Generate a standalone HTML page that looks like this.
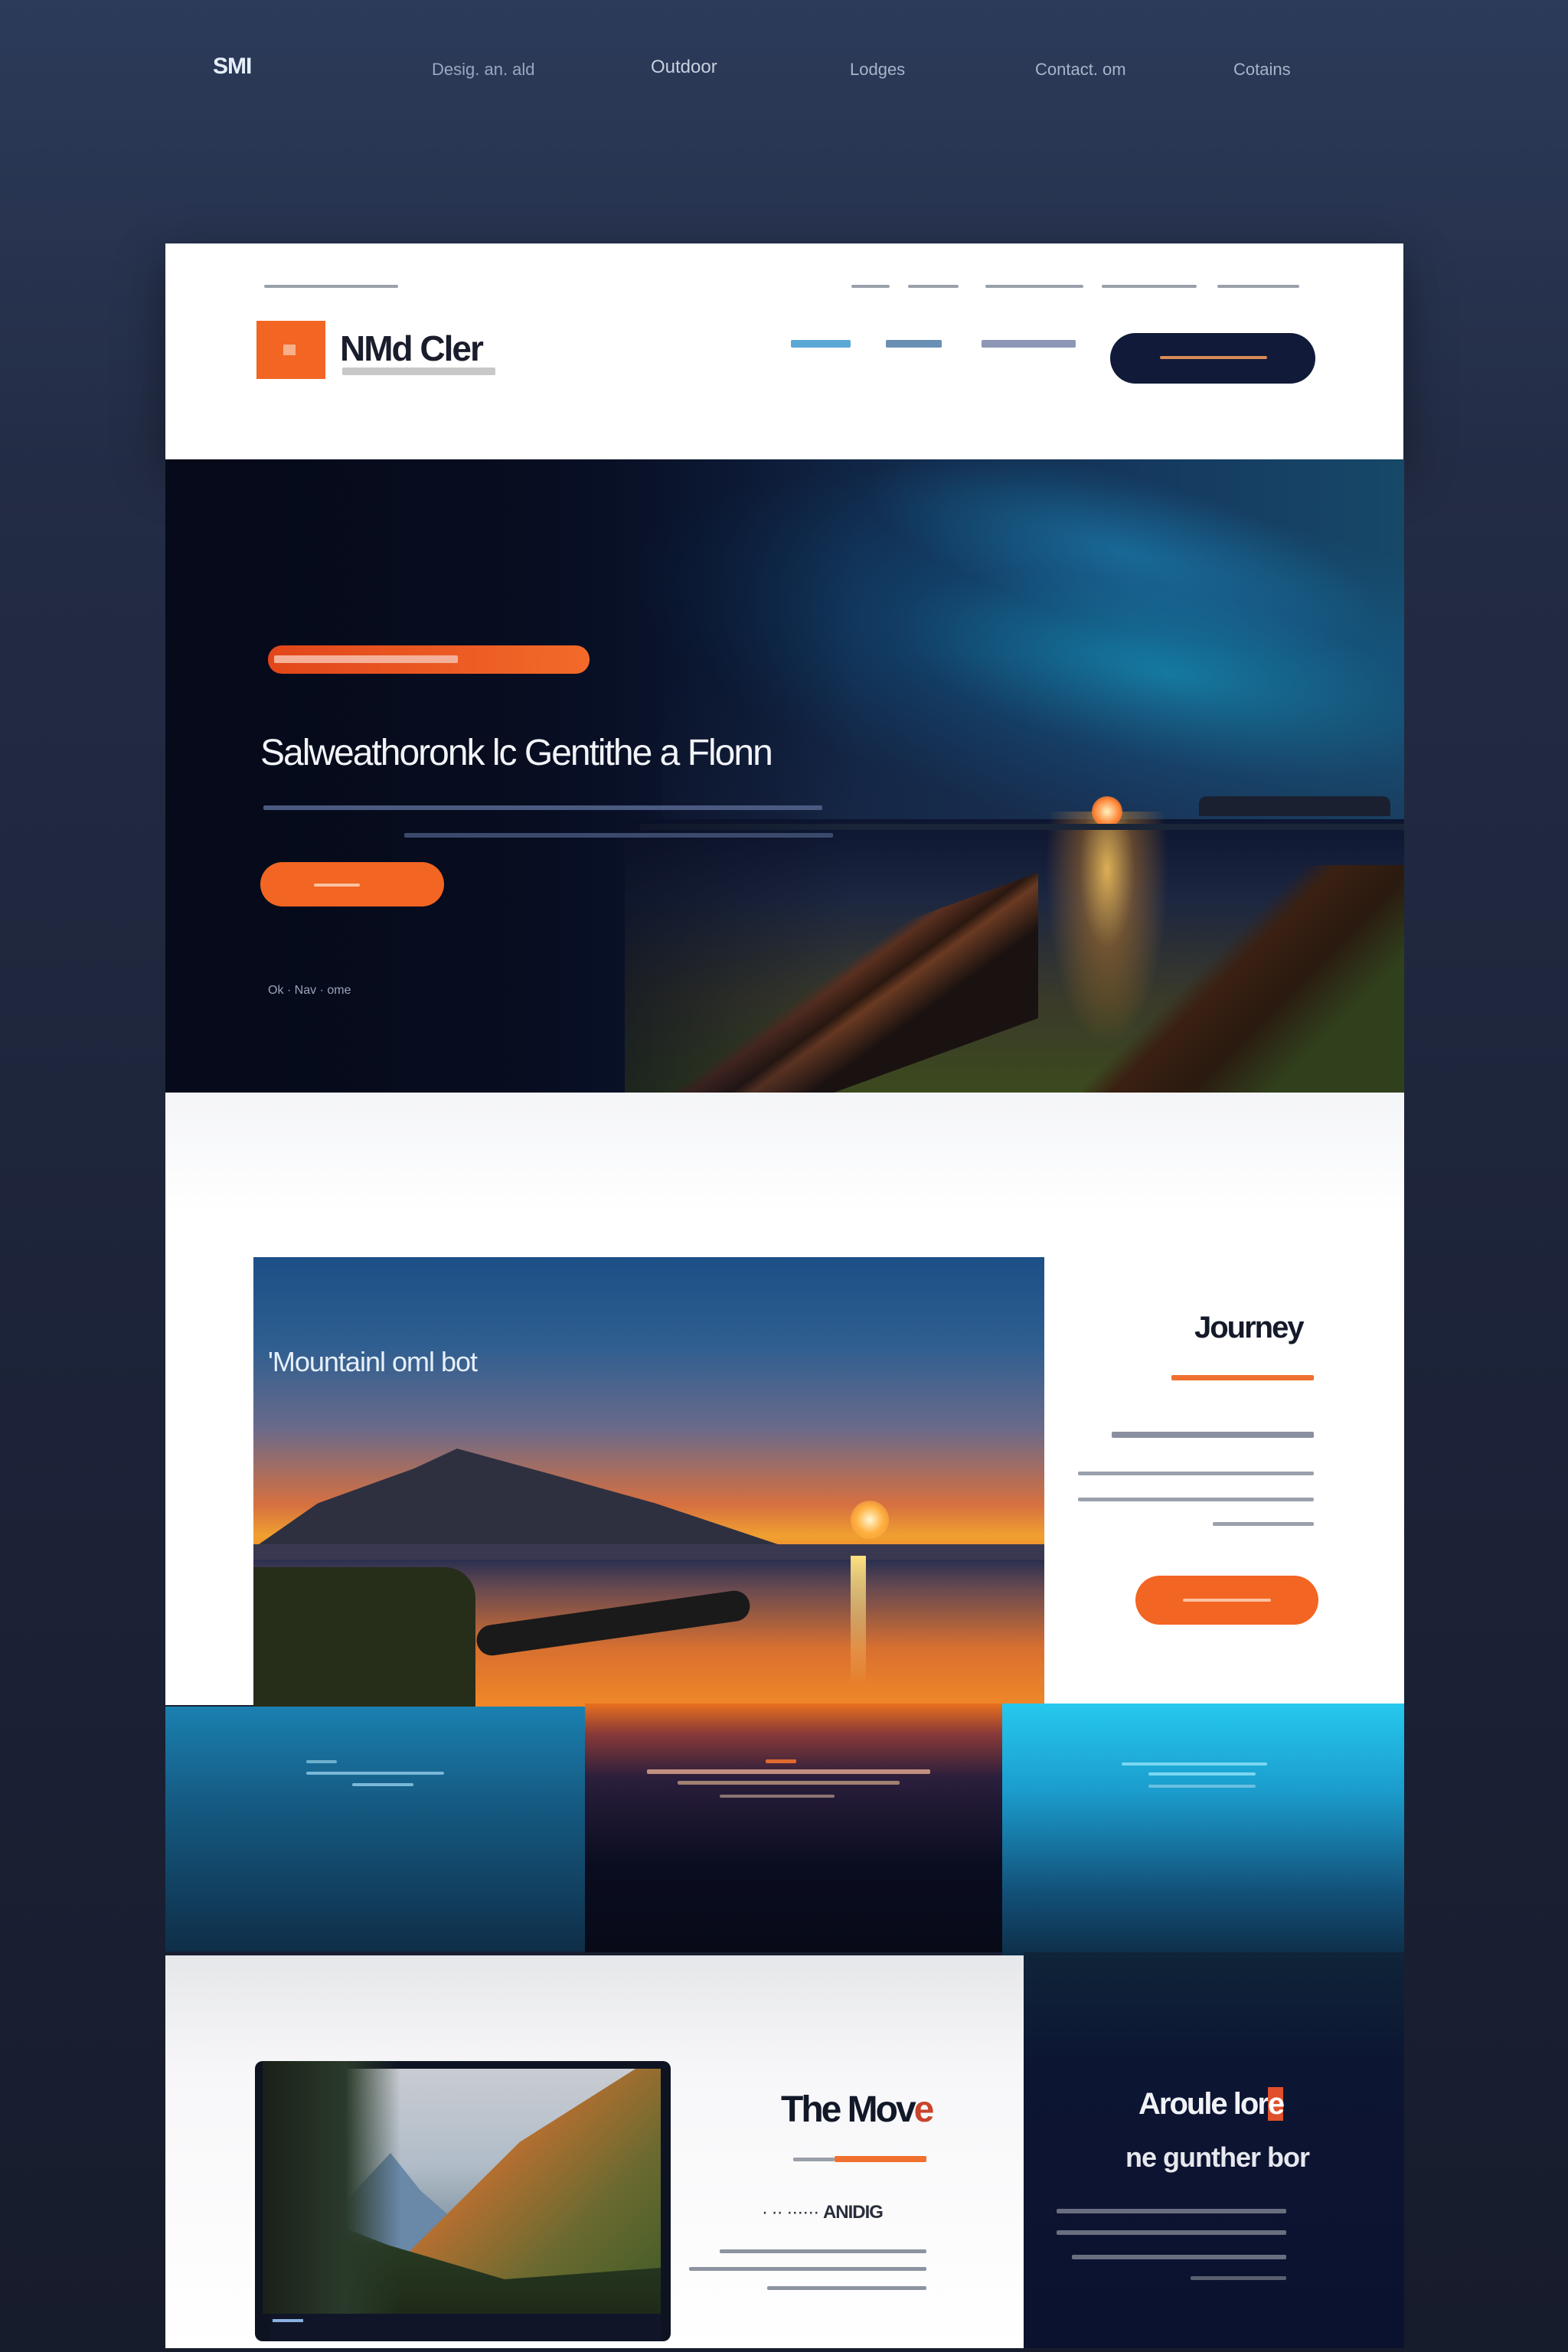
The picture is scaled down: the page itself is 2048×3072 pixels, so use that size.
<!DOCTYPE html>
<html><head><meta charset="utf-8"><style>
*{margin:0;padding:0;box-sizing:border-box}
body{width:2048px;height:3072px;position:relative;overflow:hidden;font-family:"Liberation Sans",sans-serif;background:linear-gradient(180deg,#2c3b5a 0%,#232c45 20%,#1c2338 60%,#171c2c 100%)}
.a{position:absolute}
.t{position:absolute;white-space:nowrap}
.ln{position:absolute;height:5px;border-radius:2px}
</style></head><body>
<!-- top nav -->
<div class="t" style="left:278px;top:70px;font-size:30px;font-weight:bold;color:#e6eef8;letter-spacing:-1px">SMI</div>
<div class="t" style="left:564px;top:78px;font-size:22px;color:#9aa8bf">Desig. an. ald</div>
<div class="t" style="left:850px;top:74px;font-size:24px;color:#c7d0de">Outdoor</div>
<div class="t" style="left:1110px;top:78px;font-size:22px;color:#a8b4c8">Lodges</div>
<div class="t" style="left:1352px;top:78px;font-size:22px;color:#a8b4c8">Contact. om</div>
<div class="t" style="left:1611px;top:78px;font-size:22px;color:#a8b4c8">Cotains</div>

<!-- header card -->
<div class="a" style="left:216px;top:318px;width:1617px;height:282px;background:#fff;box-shadow:0 20px 60px rgba(0,0,0,.4)"></div>
<div class="ln" style="left:345px;top:372px;width:175px;height:4px;background:#9aa0aa"></div>
<div class="ln" style="left:1112px;top:372px;width:50px;height:4px;background:#9aa0aa"></div>
<div class="ln" style="left:1186px;top:372px;width:66px;height:4px;background:#9aa0aa"></div>
<div class="ln" style="left:1287px;top:372px;width:128px;height:4px;background:#9aa0aa"></div>
<div class="ln" style="left:1439px;top:372px;width:124px;height:4px;background:#9aa0aa"></div>
<div class="ln" style="left:1590px;top:372px;width:107px;height:4px;background:#9aa0aa"></div>
<div class="a" style="left:335px;top:419px;width:90px;height:76px;background:#f26522"></div>
<div class="a" style="left:370px;top:450px;width:16px;height:14px;background:#f7b08a"></div>
<div class="t" style="left:444px;top:428px;font-size:46px;font-weight:bold;color:#1a1d2c;letter-spacing:-2px">NMd Cler</div>
<div class="ln" style="left:447px;top:480px;width:200px;height:10px;background:#c8c8c8"></div>
<div class="ln" style="left:1033px;top:444px;width:78px;height:10px;background:#5ba7d6"></div>
<div class="ln" style="left:1157px;top:444px;width:73px;height:10px;background:#6a8fb5"></div>
<div class="ln" style="left:1282px;top:444px;width:123px;height:10px;background:#8d97b5"></div>
<div class="a" style="left:1450px;top:435px;width:268px;height:66px;border-radius:33px;background:#111a38"></div>
<div class="ln" style="left:1515px;top:465px;width:140px;height:4px;background:#d98a55"></div>

<!-- hero -->
<div class="a" style="left:216px;top:600px;width:1618px;height:827px;overflow:hidden;background:linear-gradient(90deg,#070b1c 0%,#0b1430 30%,#102545 55%,#153a60 80%,#164868 100%)">
  <div class="a" style="left:600px;top:-100px;width:1200px;height:650px;background:radial-gradient(ellipse 60% 35% at 60% 55%,rgba(20,170,210,.6),rgba(20,120,180,.25) 50%,rgba(0,0,0,0) 100%);transform:rotate(12deg)"></div>
  <div class="a" style="left:900px;top:20px;width:700px;height:200px;background:radial-gradient(ellipse at 50% 50%,rgba(30,150,200,.45),rgba(0,0,0,0) 70%);transform:rotate(15deg)"></div>
  <div class="a" style="left:650px;top:0;width:1000px;height:560px;background:linear-gradient(180deg,rgba(0,0,0,0) 45%,rgba(30,40,70,.6) 100%)"></div>
  <div class="a" style="left:600px;top:470px;width:1018px;height:360px;background:linear-gradient(180deg,#0d1530 0%,#1d2740 30%,#3a3a2a 65%,#3c4a1e 100%)"></div>
  <div class="a" style="left:1130px;top:460px;width:200px;height:380px;background:radial-gradient(ellipse 40% 60% at 50% 20%,rgba(255,200,90,.85),rgba(240,150,40,.35) 45%,rgba(0,0,0,0) 100%)"></div>
  <div class="a" style="left:1210px;top:440px;width:40px;height:40px;border-radius:50%;background:radial-gradient(#fff2c0,#ff8030 60%,rgba(255,100,30,0))"></div>
  <div class="a" style="left:1350px;top:440px;width:250px;height:26px;background:#1a2030;border-radius:10px 10px 0 0"></div>
  <div class="a" style="left:620px;top:476px;width:1000px;height:8px;background:#1a2538"></div>
  <div class="a" style="left:590px;top:640px;width:550px;height:190px;background:linear-gradient(160deg,rgba(0,0,0,0) 0%,rgba(0,0,0,0) 35%,#5a3020 40%,#2a1810 50%,#6a3a22 55%,#1a1210 70%);transform:skewY(-20deg)"></div>
  <div class="a" style="left:1200px;top:530px;width:420px;height:300px;background:linear-gradient(135deg,rgba(0,0,0,0) 40%,#3a2012 46%,#2a1a10 60%,#30401c 75%)"></div>
  <div class="a" style="left:0;top:0;width:900px;height:827px;background:linear-gradient(90deg,#060a1a 0%,rgba(7,12,30,.9) 50%,rgba(7,12,30,0) 100%)"></div>
</div>
<div class="a" style="left:350px;top:843px;width:420px;height:37px;border-radius:18px;background:linear-gradient(90deg,#e2461a,#f26a2a)"></div>
<div class="ln" style="left:358px;top:856px;width:240px;height:10px;background:#f5b09a"></div>
<div class="t" style="left:340px;top:956px;font-size:48px;color:#f2f4f8;letter-spacing:-2px">Salweathoronk lc Gentithe a Flonn</div>
<div class="ln" style="left:344px;top:1052px;width:730px;height:6px;background:#4a5a80"></div>
<div class="ln" style="left:528px;top:1088px;width:560px;height:6px;background:#3b4a6c"></div>
<div class="a" style="left:340px;top:1126px;width:240px;height:58px;border-radius:29px;background:#f26522"></div>
<div class="ln" style="left:410px;top:1154px;width:60px;height:4px;background:#f9c2a0"></div>
<div class="t" style="left:350px;top:1285px;font-size:16px;color:#9aa3bb">Ok · Nav · ome</div>

<!-- white section -->
<div class="a" style="left:216px;top:1427px;width:1618px;height:800px;background:linear-gradient(180deg,#f4f5f8,#ffffff 20%)"></div>
<div class="a" style="left:331px;top:1642px;width:1033px;height:588px;overflow:hidden;background:linear-gradient(180deg,#1c4f86 0%,#2f5f90 20%,#6a6a8a 38%,#d67040 55%,#f0a030 62%,#f07020 70%,#c85a20 85%,#e8701e 100%)">
  <div class="a" style="left:0;top:250px;width:700px;height:130px;background:#2e3040;clip-path:polygon(0 100%,12% 55%,30% 20%,38% 0,55% 25%,75% 55%,100% 100%)"></div>
  <div class="a" style="left:0;top:375px;width:1033px;height:20px;background:#3a3850"></div>
  <div class="a" style="left:780px;top:318px;width:50px;height:50px;border-radius:50%;background:radial-gradient(#fff8d0,#ffb040 50%,rgba(255,150,40,0))"></div>
  <div class="a" style="left:0;top:395px;width:1033px;height:193px;background:linear-gradient(180deg,#2a3050 0%,#6a4a50 20%,#d87030 60%,#f08828 100%)"></div>
  <div class="a" style="left:0;top:405px;width:290px;height:183px;background:#262e1a;border-radius:0 40px 0 0"></div>
  <div class="a" style="left:290px;top:458px;width:360px;height:40px;background:#1a1a1a;border-radius:20px;transform:rotate(-8deg)"></div>
  <div class="a" style="left:780px;top:390px;width:20px;height:170px;background:linear-gradient(#ffe080,rgba(255,200,80,0))"></div>
</div>
<div class="t" style="left:350px;top:1758px;font-size:36px;color:#e6f0fa;letter-spacing:-1px">'Mountainl oml bot</div>
<div class="t" style="left:1560px;top:1712px;font-size:40px;font-weight:bold;color:#151a2a;letter-spacing:-2px">Journey</div>
<div class="ln" style="left:1530px;top:1796px;width:186px;height:7px;background:#f07030"></div>
<div class="ln" style="left:1452px;top:1870px;width:264px;height:8px;background:#8a90a0"></div>
<div class="ln" style="left:1408px;top:1922px;width:308px;height:5px;background:#9aa0ac"></div>
<div class="ln" style="left:1408px;top:1956px;width:308px;height:5px;background:#9aa0ac"></div>
<div class="ln" style="left:1584px;top:1988px;width:132px;height:5px;background:#9aa0ac"></div>
<div class="a" style="left:1483px;top:2058px;width:239px;height:64px;border-radius:32px;background:#f26522"></div>
<div class="ln" style="left:1545px;top:2088px;width:115px;height:4px;background:#f9c2a0"></div>

<!-- three panels -->
<div class="a" style="left:216px;top:2229px;width:548px;height:320px;background:linear-gradient(180deg,#1a80b0 0%,#155a82 40%,#0f2e48 100%)"></div>
<div class="a" style="left:764px;top:2225px;width:546px;height:325px;background:linear-gradient(180deg,#e8701e 0%,#8a3a38 12%,#2a1e3c 30%,#0a0d20 65%,#080a18 100%)"></div>
<div class="a" style="left:1309px;top:2225px;width:525px;height:330px;background:linear-gradient(180deg,#26c8ee 0%,#1b9ccc 35%,#125078 75%,#0e2e48 100%)"></div>
<div class="ln" style="left:400px;top:2299px;width:40px;height:4px;background:#6fb0d0"></div>
<div class="ln" style="left:400px;top:2314px;width:180px;height:4px;background:#7ab8d8"></div>
<div class="ln" style="left:460px;top:2329px;width:80px;height:4px;background:#7ab8d8"></div>
<div class="ln" style="left:1000px;top:2298px;width:40px;height:5px;background:#e06a30"></div>
<div class="ln" style="left:845px;top:2311px;width:370px;height:6px;background:#c29080"></div>
<div class="ln" style="left:885px;top:2326px;width:290px;height:5px;background:#a08070"></div>
<div class="ln" style="left:940px;top:2344px;width:150px;height:4px;background:#8a7570"></div>
<div class="ln" style="left:1465px;top:2302px;width:190px;height:4px;background:#7ad8f0"></div>
<div class="ln" style="left:1500px;top:2315px;width:140px;height:4px;background:#7ad8f0"></div>
<div class="ln" style="left:1500px;top:2331px;width:140px;height:4px;background:#6ac0e0"></div>

<!-- bottom -->
<div class="a" style="left:1337px;top:2550px;width:497px;height:517px;background:linear-gradient(180deg,#0f2438 0%,#0c1532 30%,#0b1230 100%)"></div>
<div class="a" style="left:216px;top:2554px;width:1121px;height:513px;background:linear-gradient(180deg,#e6e7ea,#f7f7f9 30%,#fff)"></div>
<div class="a" style="left:333px;top:2692px;width:543px;height:366px;border-radius:10px;overflow:hidden;background:#0e1322">
  <div class="a" style="left:20px;top:10px;width:510px;height:320px;background:linear-gradient(180deg,#c9ccd2 0%,#b0bcc8 40%,#7a8e9a 70%)"></div>
  <div class="a" style="left:60px;top:120px;width:260px;height:140px;background:#6a88a8;clip-path:polygon(0 100%,30% 30%,45% 0,60% 35%,100% 100%)"></div>
  <div class="a" style="left:120px;top:10px;width:410px;height:320px;background:linear-gradient(135deg,#e8a050,#c07030 40%,#6a6a30 70%,#3e5a28);clip-path:polygon(100% 0,92% 0,55% 30%,0 100%,100% 100%)"></div>
  <div class="a" style="left:20px;top:180px;width:510px;height:150px;background:linear-gradient(180deg,rgba(40,70,40,0),#283a22 40%,#1e2a18);clip-path:polygon(0 0,30% 40%,60% 70%,100% 60%,100% 100%,0 100%)"></div>
  <div class="a" style="left:10px;top:0;width:180px;height:330px;background:linear-gradient(90deg,#1a2018,#2a3a2a 60%,rgba(40,60,40,0))"></div>
  <div class="a" style="left:20px;top:330px;width:510px;height:36px;background:#101628"></div>
  <div class="a" style="left:23px;top:337px;width:40px;height:4px;background:#8ab0e0"></div>
</div>
<div class="t" style="left:1020px;top:2728px;font-size:48px;font-weight:bold;color:#111828;letter-spacing:-3px">The Mov<span style="color:#c8442a">e</span></div>
<div class="ln" style="left:1036px;top:2818px;width:54px;height:5px;background:#9aa0aa"></div>
<div class="ln" style="left:1090px;top:2816px;width:120px;height:8px;background:#f07030"></div>
<div class="t" style="left:995px;top:2876px;font-size:24px;color:#2a2e3a;letter-spacing:-1px">· ·· ······ <b>ANIDIG</b></div>
<div class="ln" style="left:940px;top:2938px;width:270px;height:5px;background:#8d93a0"></div>
<div class="ln" style="left:900px;top:2961px;width:310px;height:5px;background:#8d93a0"></div>
<div class="ln" style="left:1002px;top:2986px;width:208px;height:5px;background:#8d93a0"></div>
<div class="t" style="left:1487px;top:2726px;font-size:40px;font-weight:bold;color:#f0f2f6;letter-spacing:-2px">Aroule lor<span style="background:#e0502a;color:#fff">e</span></div>
<div class="t" style="left:1470px;top:2797px;font-size:36px;font-weight:bold;color:#e6e8ee;letter-spacing:-1px">ne gunther bor</div>
<div class="ln" style="left:1380px;top:2885px;width:300px;height:6px;background:#6a6f80"></div>
<div class="ln" style="left:1380px;top:2913px;width:300px;height:6px;background:#6a6f80"></div>
<div class="ln" style="left:1400px;top:2945px;width:280px;height:6px;background:#6a6f80"></div>
<div class="ln" style="left:1555px;top:2973px;width:125px;height:5px;background:#5a5f70"></div>
</body></html>
